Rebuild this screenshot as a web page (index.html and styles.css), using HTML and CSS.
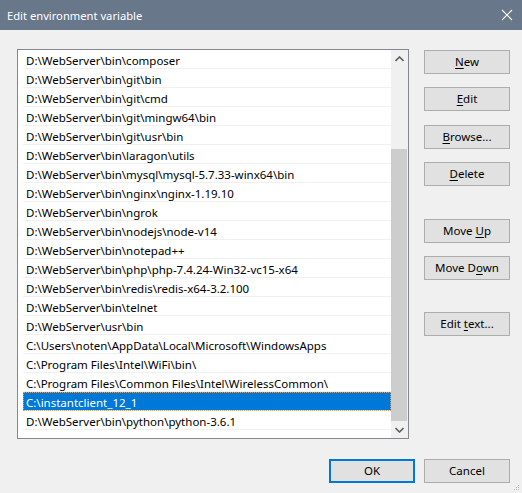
FILE: index.html
```html
<!DOCTYPE html>
<html>
<head>
<meta charset="utf-8">
<link rel="stylesheet" href="styles.css">
</head>
<body>
<div class="window">
  <div class="titlebar">
    <span class="title">Edit environment variable</span>
    <svg class="close" width="12" height="12" viewBox="0 0 12 12"><path d="M1 1 L11 11 M11 1 L1 11" stroke="#fff" stroke-width="1.1" fill="none"/></svg>
  </div>
  <div class="content">
    <div class="main">
      <div class="listbox">
        <ul class="items">
          <li>D:\WebServer\bin\composer</li>
          <li>D:\WebServer\bin\git\bin</li>
          <li>D:\WebServer\bin\git\cmd</li>
          <li>D:\WebServer\bin\git\mingw64\bin</li>
          <li>D:\WebServer\bin\git\usr\bin</li>
          <li>D:\WebServer\bin\laragon\utils</li>
          <li>D:\WebServer\bin\mysql\mysql-5.7.33-winx64\bin</li>
          <li>D:\WebServer\bin\nginx\nginx-1.19.10</li>
          <li>D:\WebServer\bin\ngrok</li>
          <li>D:\WebServer\bin\nodejs\node-v14</li>
          <li>D:\WebServer\bin\notepad++</li>
          <li>D:\WebServer\bin\php\php-7.4.24-Win32-vc15-x64</li>
          <li>D:\WebServer\bin\redis\redis-x64-3.2.100</li>
          <li>D:\WebServer\bin\telnet</li>
          <li>D:\WebServer\usr\bin</li>
          <li>C:\Users\noten\AppData\Local\Microsoft\WindowsApps</li>
          <li>C:\Program Files\Intel\WiFi\bin\</li>
          <li>C:\Program Files\Common Files\Intel\WirelessCommon\</li>
          <li class="selected">C:\instantclient_12_1</li>
          <li>D:\WebServer\bin\python\python-3.6.1</li>
        </ul>
        <div class="scrollbar">
          <div class="arrow"><svg width="9" height="6" viewBox="0 0 9 6"><path d="M0.5 5 L4.5 1 L8.5 5" stroke="#606060" stroke-width="1.6" fill="none"/></svg></div>
          <div class="thumb"></div>
          <div class="arrow down"><svg width="9" height="6" viewBox="0 0 9 6"><path d="M0.5 1 L4.5 5 L8.5 1" stroke="#606060" stroke-width="1.6" fill="none"/></svg></div>
        </div>
      </div>
      <div class="buttons">
        <button class="btn b-new"><u>N</u>ew</button>
        <button class="btn b-edit"><u>E</u>dit</button>
        <button class="btn b-browse"><u>B</u>rowse...</button>
        <button class="btn b-delete"><u>D</u>elete</button>
        <button class="btn b-up">Move <u>U</u>p</button>
        <button class="btn b-down">Move D<u>o</u>wn</button>
        <button class="btn b-text">Edit <u>t</u>ext...</button>
      </div>
    </div>
    <div class="footer">
      <button class="btn default">OK</button>
      <button class="btn">Cancel</button>
    </div>
  </div>
  <svg class="grip" width="6" height="6" viewBox="0 0 6 6"><rect x="4" y="0" width="1" height="1" fill="#b8b8b8"/><rect x="2" y="2" width="1" height="1" fill="#b8b8b8"/><rect x="4" y="2" width="1" height="1" fill="#b8b8b8"/><rect x="0" y="4" width="1" height="1" fill="#b8b8b8"/><rect x="2" y="4" width="1" height="1" fill="#b8b8b8"/><rect x="4" y="4" width="1" height="1" fill="#b8b8b8"/></svg>
</div>
</body>
</html>
```
FILE: styles.css
```css
* { box-sizing: border-box; }
html, body { margin: 0; padding: 0; }
body {
  width: 522px;
  height: 493px;
  background: #f0f0f0;
  font-family: "Noto Sans", "Open Sans", sans-serif;
  font-size: 11.5px;
  color: #000;
  overflow: hidden;
}
.window {
  position: relative;
  width: 522px;
  height: 493px;
}
.titlebar {
  height: 30px;
  background: #68778a;
  display: flex;
  align-items: center;
  justify-content: space-between;
  padding: 0 8px 0 7px;
}
.title {
  color: #fff;
  font-size: 11.2px;
  line-height: 16px;
  padding-top: 1px;
}
.close { display: block; margin-right: 1px; }
.content {
  padding: 19px 12px 0 17px;
}
.main {
  display: flex;
  gap: 15px;
}
.listbox {
  width: 392px;
  height: 390px;
  border: 1px solid #828790;
  background: #fff;
  display: flex;
}
.items {
  list-style: none;
  margin: 0;
  padding: 0 0 0 5px;
  flex: 1;
}
.items li {
  height: 19px;
  padding-top: 3px;
  line-height: 15px;
  border-bottom: 1px solid #f0f0f0;
  padding-left: 3px;
  white-space: nowrap;
  overflow: hidden;
}
.items li.selected {
  background: #0078d7;
  color: #fff;
  outline: 1px dotted #e0a060;
  outline-offset: -1px;
}
.scrollbar {
  width: 17px;
  background: #f0f0f0;
  display: flex;
  flex-direction: column;
}
.arrow {
  height: 17px;
  display: flex;
  align-items: center;
  justify-content: center;
}
.arrow svg { display: block; }
.thumb {
  margin: 82px 1px 0 0;
  height: 272px;
  background: #cdcdcd;
}
.arrow.down { margin-top: auto; }
.buttons {
  width: 86px;
  display: flex;
  flex-direction: column;
  padding-top: 1px;
}
.btn {
  width: 86px;
  height: 24px;
  background: #e1e1e1;
  border: 1px solid #adadad;
  font-family: "Noto Sans", "Open Sans", sans-serif;
  font-size: 11.5px;
  color: #000;
  padding: 0;
  margin: 0;
  line-height: 20px;
}
.btn u { text-underline-offset: 2px; }
.b-edit { margin-top: 13px; }
.b-browse { margin-top: 14px; }
.b-delete { margin-top: 13px; }
.b-up { margin-top: 33px; }
.b-down { margin-top: 13px; }
.b-text { margin-top: 32px; }
.footer {
  display: flex;
  justify-content: flex-end;
  gap: 9px;
  margin-top: 20px;
  padding-right: 0;
}
.btn.default {
  border: 2px solid #0078d7;
}
.grip {
  position: absolute;
  right: 2px;
  bottom: 2px;
}
```
